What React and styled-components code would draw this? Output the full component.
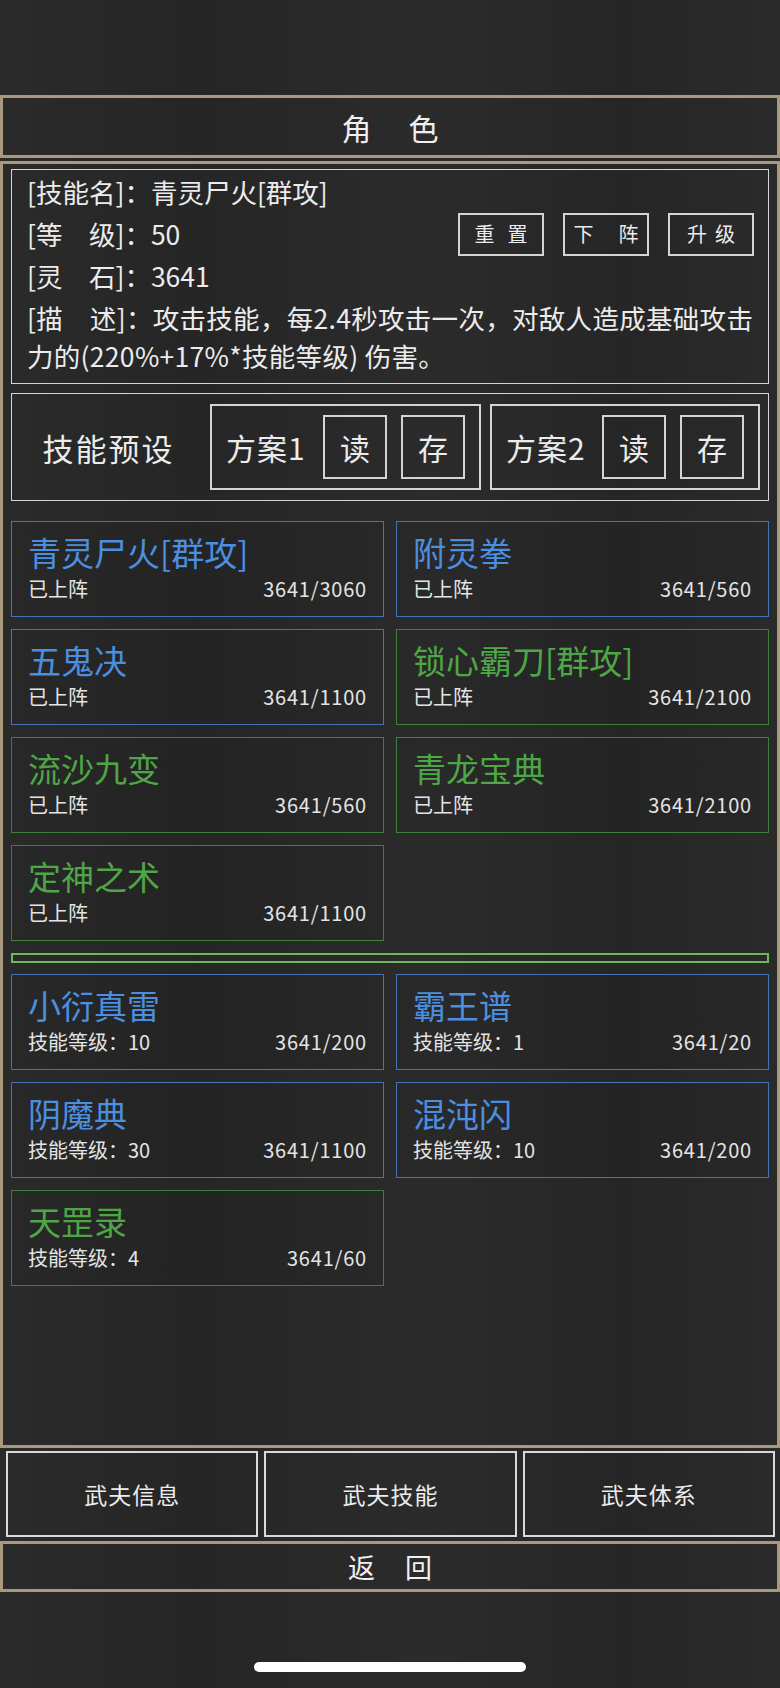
import styled, { createGlobalStyle } from "styled-components";

const GlobalStyle = createGlobalStyle`
  html, body {
    margin: 0;
    padding: 0;
    background: #262626;
  }
  body {
    font-family: "Noto Sans CJK SC", "Noto Sans", sans-serif;
    color: #ececec;
  }
`;

const TAN = "#a99a7e";
const LINE = "#d4d4d4";

const TONES = {
  blue: { text: "#4b8fe0", border: "#4473b6" },
  green: { text: "#4fa646", border: "#3f7f3b" },
};

const Page = styled.div`
  width: 780px;
  height: 1688px;
  box-sizing: border-box;
  padding-top: 95px;
  display: flex;
  flex-direction: column;
  background: linear-gradient(
      90deg,
      rgba(255, 255, 255, 0.015),
      rgba(0, 0, 0, 0.04) 25%,
      rgba(255, 255, 255, 0.02) 55%,
      rgba(0, 0, 0, 0.03) 80%,
      rgba(255, 255, 255, 0.015)
    ),
    #272727;
  overflow: hidden;
`;

const FramedBar = styled.div`
  box-sizing: border-box;
  height: ${(p) => p.$height}px;
  margin-top: ${(p) => p.$top || 0}px;
  border: 3px solid ${TAN};
  display: flex;
  align-items: center;
  justify-content: center;
  font-size: ${(p) => p.$size}px;
  letter-spacing: ${(p) => p.$spacing}px;
  padding-left: ${(p) => p.$spacing}px;
  color: #f0f0f0;
`;

const MainPanel = styled.div`
  margin-top: 3px;
  height: 1287px;
  box-sizing: border-box;
  border: 3px solid ${TAN};
  padding: 5px 8px 0;
`;

const InfoBox = styled.div`
  box-sizing: border-box;
  border: 1px solid ${LINE};
  padding: 1px 15px 8px;
  font-size: 26.5px;
`;

const InfoRow = styled.div`
  display: flex;
  align-items: center;
  justify-content: space-between;
  height: 42px;
  line-height: 42px;
  white-space: nowrap;
`;

const ActionGroup = styled.div`
  display: flex;
  gap: 19px;
  margin-right: -1px;
`;

const ActionButton = styled.div`
  box-sizing: border-box;
  width: 86px;
  height: 43px;
  border: 2px solid ${LINE};
  display: flex;
  align-items: center;
  justify-content: center;
  font-size: 20px;
  line-height: 1;
  letter-spacing: ${(p) => p.$spacing}px;
  padding-left: ${(p) => p.$spacing}px;
`;

const Desc = styled.div`
  padding-top: 2px;
  line-height: 38px;
  white-space: nowrap;
  letter-spacing: 0.3px;
`;

const PresetBox = styled.div`
  margin-top: 9px;
  box-sizing: border-box;
  height: 108px;
  border: 1px solid ${LINE};
  display: flex;
  align-items: center;
  padding: 0 8px 0 0;
  gap: 9px;
`;

const PresetLabel = styled.div`
  flex: 1;
  text-align: center;
  font-size: 31px;
  letter-spacing: 2px;
  padding-left: 4px;
  white-space: nowrap;
`;

const PlanBox = styled.div`
  box-sizing: border-box;
  flex: none;
  width: ${(p) => p.$width}px;
  height: 86px;
  border: 2px solid ${LINE};
  display: flex;
  align-items: center;
  padding: 0 14px;
  gap: 14px;
`;

const PlanName = styled.div`
  flex: 1;
  font-size: 30px;
  letter-spacing: 1px;
  white-space: nowrap;
`;

const PlanButton = styled.div`
  box-sizing: border-box;
  flex: none;
  width: 64px;
  height: 64px;
  border: 2px solid ${LINE};
  display: flex;
  align-items: center;
  justify-content: center;
  font-size: 30px;
`;

const SkillGrid = styled.div`
  margin-top: ${(p) => p.$top}px;
  display: grid;
  grid-template-columns: 1fr 1fr;
  gap: 12px;
`;

const Divider = styled.div`
  margin: 12px 0 11px;
  height: 10px;
  box-sizing: border-box;
  border: 2px solid #6cb85a;
`;

const SkillCard = styled.div`
  box-sizing: border-box;
  height: 96px;
  border: 1px solid ${(p) => TONES[p.$tone].border};
  padding: 10px 16px 0;
  background: rgba(0, 0, 0, 0.04);
`;

const SkillName = styled.div`
  font-size: 33px;
  line-height: 40px;
  color: ${(p) => TONES[p.$tone].text};
  white-space: nowrap;
`;

const SkillMeta = styled.div`
  margin-top: 4px;
  display: flex;
  justify-content: space-between;
  font-size: 20px;
  line-height: 26px;
  color: #e4e4e4;
`;

const Cost = styled.span`
  letter-spacing: 0.8px;
`;

const Tabs = styled.div`
  margin-top: 3px;
  height: 86px;
  display: grid;
  grid-template-columns: repeat(3, 1fr);
  gap: 6px;
  padding: 0 5px 0 6px;
`;

const Tab = styled.div`
  box-sizing: border-box;
  border: 2px solid #d9d9d9;
  display: flex;
  align-items: center;
  justify-content: center;
  font-size: 23px;
  letter-spacing: 1px;
`;

const HomeIndicator = styled.div`
  margin: 70px auto 0;
  width: 272px;
  height: 10px;
  border-radius: 5px;
  background: #ffffff;
`;

const equipped = [
  { name: "青灵尸火[群攻]", tone: "blue", cost: "3641/3060" },
  { name: "附灵拳", tone: "blue", cost: "3641/560" },
  { name: "五鬼决", tone: "blue", cost: "3641/1100" },
  { name: "锁心霸刀[群攻]", tone: "green", cost: "3641/2100" },
  { name: "流沙九变", tone: "green", cost: "3641/560" },
  { name: "青龙宝典", tone: "green", cost: "3641/2100" },
  { name: "定神之术", tone: "green", cost: "3641/1100" },
];

const learned = [
  { name: "小衍真雷", tone: "blue", level: 10, cost: "3641/200" },
  { name: "霸王谱", tone: "blue", level: 1, cost: "3641/20" },
  { name: "阴魔典", tone: "blue", level: 30, cost: "3641/1100" },
  { name: "混沌闪", tone: "blue", level: 10, cost: "3641/200" },
  { name: "天罡录", tone: "green", level: 4, cost: "3641/60" },
];

function Card({ skill, label }) {
  return (
    <SkillCard $tone={skill.tone}>
      <SkillName $tone={skill.tone}>{skill.name}</SkillName>
      <SkillMeta>
        <span>{label}</span>
        <Cost>{skill.cost}</Cost>
      </SkillMeta>
    </SkillCard>
  );
}

export default function App() {
  return (
    <>
      <GlobalStyle />
      <Page>
        <FramedBar $height={63} $size={30} $spacing={37}>
          角色
        </FramedBar>

        <MainPanel>
          <InfoBox>
            <InfoRow>[技能名]：青灵尸火[群攻]</InfoRow>
            <InfoRow>
              <span>[等　级]：50</span>
              <ActionGroup>
                <ActionButton $spacing={13}>重置</ActionButton>
                <ActionButton $spacing={25}>下阵</ActionButton>
                <ActionButton $spacing={8}>升级</ActionButton>
              </ActionGroup>
            </InfoRow>
            <InfoRow>[灵　石]：3641</InfoRow>
            <Desc>
              [描　述]：攻击技能，每2.4秒攻击一次，对敌人造成基础攻击
              <br />
              力的(220%+17%*技能等级) 伤害。
            </Desc>
          </InfoBox>

          <PresetBox>
            <PresetLabel>技能预设</PresetLabel>
            <PlanBox $width={271}>
              <PlanName>方案1</PlanName>
              <PlanButton>读</PlanButton>
              <PlanButton>存</PlanButton>
            </PlanBox>
            <PlanBox $width={270}>
              <PlanName>方案2</PlanName>
              <PlanButton>读</PlanButton>
              <PlanButton>存</PlanButton>
            </PlanBox>
          </PresetBox>

          <SkillGrid $top={20}>
            {equipped.map((s) => (
              <Card key={s.name} skill={s} label="已上阵" />
            ))}
          </SkillGrid>

          <Divider />

          <SkillGrid $top={0}>
            {learned.map((s) => (
              <Card key={s.name} skill={s} label={`技能等级：${s.level}`} />
            ))}
          </SkillGrid>
        </MainPanel>

        <Tabs>
          <Tab>武夫信息</Tab>
          <Tab>武夫技能</Tab>
          <Tab>武夫体系</Tab>
        </Tabs>

        <FramedBar $height={51} $size={27} $spacing={30} $top={4}>
          返回
        </FramedBar>

        <HomeIndicator />
      </Page>
    </>
  );
}
